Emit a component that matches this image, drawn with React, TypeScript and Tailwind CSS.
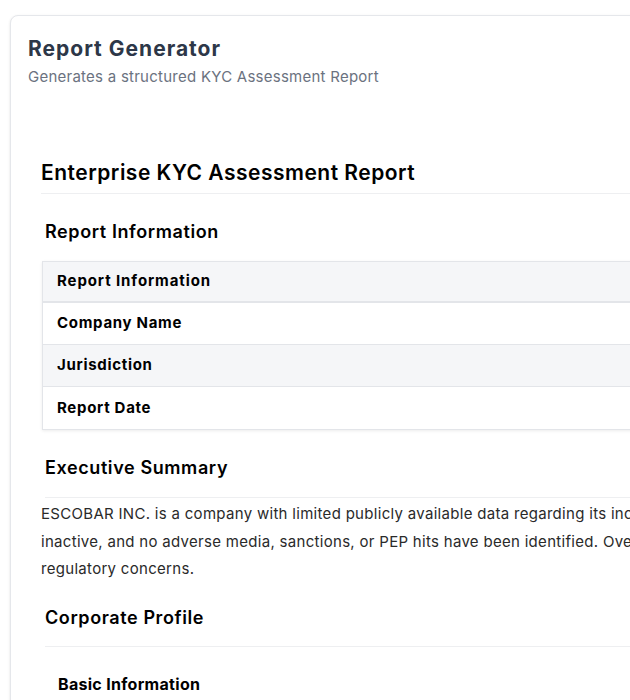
import React from 'react';

const font = { fontFamily: 'Inter, "Noto Sans", sans-serif' };

const infoRows = ['Company Name', 'Jurisdiction', 'Report Date'];

function SectionTitle({ children, className = '' }: { children: React.ReactNode; className?: string }) {
  return (
    <h3 className={'ml-[4px] text-[18px] font-semibold leading-[24px] tracking-[0.6px] text-black ' + className}>
      {children}
    </h3>
  );
}

function InfoTable() {
  return (
    <div className="ml-[1px] mt-[17px] border border-[#e3e5e9] shadow-[0_1px_3px_rgba(0,0,0,0.08)]">
      <div className="flex h-[41px] items-center border-b-2 border-[#e3e5e9] bg-[#f5f6f8] px-[14px]">
        <span className="text-[15px] font-bold tracking-[0.9px] text-black">Report Information</span>
      </div>
      {infoRows.map((label, i) => (
        <div
          key={label}
          className={
            'flex h-[42px] items-center px-[14px] ' +
            (i % 2 === 1 ? 'bg-[#f5f6f8] ' : 'bg-white ') +
            (i < infoRows.length - 1 ? 'border-b border-[#e3e5e9]' : '')
          }
        >
          <span className="text-[15px] font-bold tracking-[0.7px] text-black">{label}</span>
        </div>
      ))}
    </div>
  );
}

export default function App() {
  return (
    <div className="h-[700px] w-[630px] overflow-hidden bg-white" style={font}>
      <div className="ml-[10px] mt-[15px] w-[1200px] rounded-lg border border-gray-200 bg-white pl-[17px] pt-[19px] pb-10 shadow-sm">
        <h1 className="text-[21px] font-bold leading-[28px] tracking-[1px] text-[#2d3748]">Report Generator</h1>
        <p className="mt-[4px] text-[15px] leading-[20px] tracking-[0.25px] text-[#6b7280]">
          Generates a structured KYC Assessment Report
        </p>

        <div className="mt-[71px] pl-[13px]">
          <div className="border-b border-[#eeeff1] pb-[5px]">
            <h2 className="text-[21px] font-semibold leading-[30px] tracking-[0.5px] text-black">
              Enterprise KYC Assessment Report
            </h2>
          </div>

          <SectionTitle className="mt-[26px]">Report Information</SectionTitle>
          <InfoTable />

          <div className="ml-[4px] mt-[26px] border-b border-[#eeeff1] pb-[17px]">
            <SectionTitle className="!ml-0">Executive Summary</SectionTitle>
          </div>
          <p className="mt-[2px] text-[15px] leading-[27.5px] tracking-[0.3px] text-[#2a2a2a]">
            ESCOBAR INC. is a company with limited publicly available data regarding its incorporation status and
            ownership structure. The company appears to be
            <br />
            inactive, and no adverse media, sanctions, or PEP hits have been identified. Overall, the entity presents a
            low risk profile with no material
            <br />
            regulatory concerns.
          </p>

          <div className="ml-[4px] mt-[23px] border-b border-[#eeeff1] pb-[16px]">
            <SectionTitle className="!ml-0">Corporate Profile</SectionTitle>
          </div>
          <h4 className="mt-[26px] pl-[17px] text-[16px] font-bold leading-[22px] tracking-[0.3px] text-black">
            Basic Information
          </h4>
        </div>
      </div>
    </div>
  );
}
